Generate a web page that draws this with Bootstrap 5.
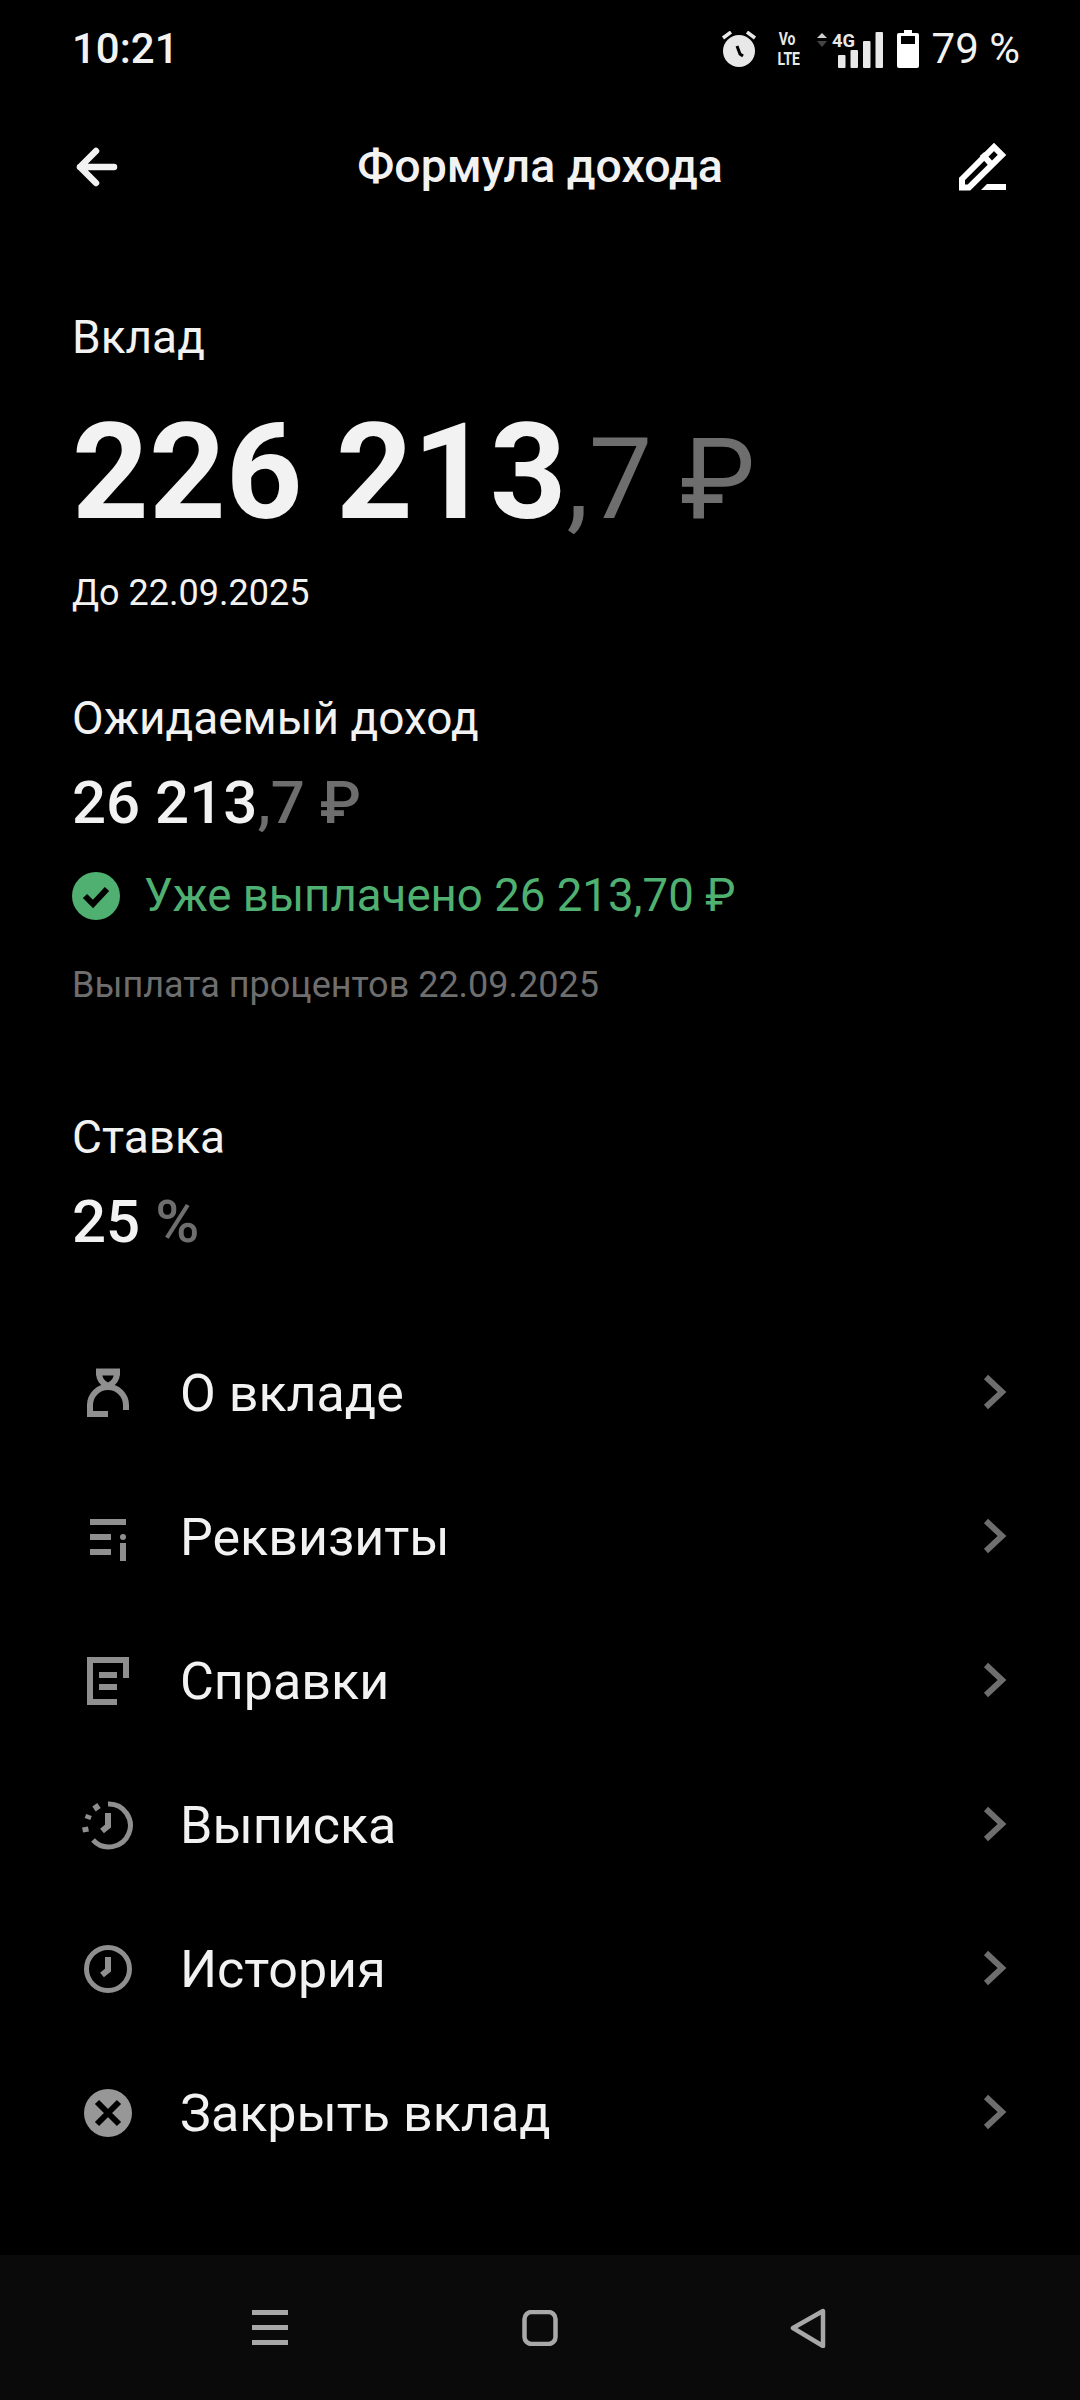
<!DOCTYPE html>
<html lang="ru">
<head>
  <meta charset="UTF-8" />
  <meta name="viewport" content="width=device-width, initial-scale=1.0" />
  <title>Формула дохода</title>
  <link rel="stylesheet" href="https://cdn.jsdelivr.net/npm/bootstrap@5.3.3/dist/css/bootstrap.min.css">
  <script src="https://cdn.jsdelivr.net/npm/bootstrap@5.3.3/dist/js/bootstrap.bundle.min.js"></script>
  <style>
    html, body {
      background: #000;
    }
    body {
      width: 1080px;
      height: 2400px;
      overflow: hidden;
      font-family: Roboto, "Liberation Sans", sans-serif;
      color: #f2f2f2;
      display: flex;
      flex-direction: column;
    }
    svg {
      display: block;
      flex: none;
    }
    .status-line {
      height: 98px;
      padding: 0 60px 0 72px;
      font-size: 42px;
      font-weight: 500;
      line-height: 1;
    }
    .status-pct {
      font-weight: 400;
      margin-left: 13px;
      white-space: nowrap;
    }
    .volte-box {
      width: 24px;
      margin-left: 18px;
      color: #e8e8e8;
      font-size: 17.5px;
      font-weight: 700;
      line-height: 20px;
      text-align: center;
    }
    .volte-box div {
      transform: scaleX(.8);
    }
    .gap-sig { margin-left: 18px; }
    .gap-bat { margin-left: 14px; }
    .top-bar {
      height: 138px;
      padding: 0 73px 0 72px;
    }
    .top-title {
      font-size: 46.5px;
      font-weight: 500;
      text-align: center;
      padding-left: 3px;
    }
    .main-area {
      padding: 0 72px;
      flex: 1;
    }
    .label-text {
      font-size: 46px;
      line-height: 50px;
    }
    .label-first { margin-top: 76px; }
    .label-income { margin-top: 79px; }
    .label-rate { margin-top: 106px; }
    .big-sum {
      font-size: 134px;
      font-weight: 700;
      line-height: 140px;
      margin-top: 41px;
    }
    .big-sum span {
      font-size: 113px;
      font-weight: 400;
      color: #6e6e6e;
    }
    .date-text {
      font-size: 36px;
      line-height: 42px;
      margin-top: 22px;
    }
    .mid-sum {
      font-size: 60px;
      font-weight: 500;
      line-height: 70px;
      margin-top: 25px;
    }
    .mid-sum span {
      color: #6e6e6e;
    }
    .paid-line {
      color: #4fb071;
      font-size: 45.6px;
      line-height: 50px;
      margin-top: 33px;
      gap: 24px;
    }
    .note-text {
      color: #6e6e6e;
      font-size: 36px;
      line-height: 42px;
      margin-top: 43px;
    }
    .menu-box {
      margin-top: 65px;
    }
    .menu-row {
      height: 144px;
      font-size: 52px;
      color: #f2f2f2;
    }
    .menu-ico {
      width: 108px;
      padding-left: 9px;
    }
    .nav-strip {
      background: #0a0a0a;
      height: 145px;
    }
    .nav-a { margin-left: 252px; }
    .nav-b { margin-left: 234px; }
    .nav-c { margin-left: 232px; }
  </style>
</head>
<body>

  <div class="status-line d-flex align-items-center justify-content-between">
    <div>10:21</div>
    <div class="d-flex align-items-center">
      <svg width="36" height="36" viewBox="0 0 36 36"><circle cx="18" cy="20" r="16" fill="#e8e8e8"/><path d="M2 7l8-6M34 7l-8-6" stroke="#e8e8e8" stroke-width="3.500"/><path d="M16 15l3 8 3 2" stroke="#000" stroke-width="3" fill="none"/></svg>
      <div class="volte-box"><div>Vo</div><div>LTE</div></div>
      <svg class="gap-sig" width="66" height="42" viewBox="0 -4 66 42"><path d="M0 6l5-5 5 5z" fill="#cfcfcf"/><path d="M0 9h10l-5 6z" fill="#444"/><text x="15" y="15" font-family="Roboto" font-size="18" font-weight="700" fill="#e8e8e8" textLength="23" lengthAdjust="spacingAndGlyphs">4G</text><g fill="#e8e8e8"><rect x="21" y="23" width="7.500" height="13" rx="1"/><rect x="33.500" y="18" width="7.500" height="18" rx="1"/><rect x="46" y="9" width="7.500" height="27" rx="1"/><rect x="58.500" y="0" width="7.500" height="36" rx="1"/></g></svg>
      <svg class="gap-bat" width="22" height="38" viewBox="0 0 22 38"><path d="M7 0h8v3h5a2 2 0 0 1 2 2v31a2 2 0 0 1-2 2H2a2 2 0 0 1-2-2V5a2 2 0 0 1 2-2h5z" fill="#fff"/><rect x="4" y="6" width="14" height="8" fill="#000"/></svg>
      <div class="status-pct">79 %</div>
    </div>
  </div>

  <div class="top-bar d-flex align-items-center">
    <svg width="46" height="40" viewBox="0 0 46 40" fill="none" stroke="#f2f2f2" stroke-width="6.500" stroke-linecap="round" stroke-linejoin="round"><path d="M42 20H8M24 4L8 20l16 16"/></svg>
    <div class="top-title flex-grow-1">Формула дохода</div>
    <svg width="48" height="48" viewBox="0 0 48 48" fill="none" stroke="#fff" stroke-width="6"><path d="M3 36L35 4 43 12 10 44.500H3z"/><path d="M23 11l10 11"/><path d="M22 47l6-6h19v6z" fill="#fff" stroke="none"/></svg>
  </div>

  <div class="main-area">
    <div class="label-text label-first">Вклад</div>
    <div class="big-sum">226 213<span>,7 ₽</span></div>
    <div class="date-text">До 22.09.2025</div>

    <div class="label-text label-income">Ожидаемый доход</div>
    <div class="mid-sum">26 213<span>,7 ₽</span></div>
    <div class="paid-line d-flex align-items-center">
      <svg width="48" height="48" viewBox="0 0 48 48"><circle cx="24" cy="24" r="24" fill="#4fb071"/><path d="M13 24l8 8 14-15" fill="none" stroke="#000" stroke-width="6"/></svg>
      <div>Уже выплачено 26 213,70 ₽</div>
    </div>
    <div class="note-text">Выплата процентов 22.09.2025</div>

    <div class="label-text label-rate">Ставка</div>
    <div class="mid-sum">25 <span>%</span></div>

    <div class="menu-box" id="menuBox"></div>
  </div>

  <div class="nav-strip d-flex align-items-center">
    <svg class="nav-a" width="36" height="36" viewBox="0 0 36 36" fill="#a8a8a8"><rect y="0" width="36" height="5"/><rect y="15" width="36" height="5"/><rect y="30" width="36" height="5"/></svg>
    <svg class="nav-b" width="36" height="36" viewBox="0 0 36 36" fill="none" stroke="#a8a8a8" stroke-width="4.500"><rect x="2.500" y="2" width="31" height="32" rx="7"/></svg>
    <svg class="nav-c" width="36" height="40" viewBox="0 0 36 40" fill="none" stroke="#a8a8a8" stroke-width="4.500" stroke-linejoin="round"><path d="M33 3v35L3 20z"/></svg>
  </div>

  <script>
    const icons = [
      `<path d="M9 47V38a18 18 0 0 1 36 0v5" /><path d="M6 47H27" /><path d="M15 5H39" stroke-width="7"/><path d="M18 6Q18 15 27 19Q36 15 36 6" />`,
      `<path d="M9 11H45M9 26H30M9 41H30M42 32V50" /><circle cx="42" cy="26" r="3" fill="#8f8f8f" stroke="none"/>`,
      `<path d="M45 23V5H9V47H36M18 20H36M18 32H36" />`,
      `<path d="M27 5A21.500 21.500 0 1 1 12 41" stroke-width="5"/><path d="M13 10l5-3.500M6.500 20l1.500-4M5 33l-1-5" /><path d="M27 14V27L21 32" />`,
      `<circle cx="27" cy="26" r="21.500" stroke-width="5"/><path d="M27 14V27L21 32" />`,
      `<circle cx="27" cy="26" r="24" fill="#979797" stroke="none"/><path d="M16 15L38 37M38 15L16 37" stroke="#000"/>`
    ];
    const rows = ["О вкладе", "Реквизиты", "Справки", "Выписка", "История", "Закрыть вклад"];

    document.getElementById("menuBox").innerHTML = rows.map((name, i) => `
      <div class="menu-row d-flex align-items-center">
        <div class="menu-ico"><svg width="54" height="54" viewBox="0 0 54 54" fill="none" stroke="#8f8f8f" stroke-width="6">${icons[i]}</svg></div>
        <div class="flex-grow-1">${name}</div>
        <svg class="mb-1" width="26" height="36" viewBox="0 0 26 36" fill="none" stroke="#6e6e6e" stroke-width="6"><path d="M4 3l16 15L4 33"/></svg>
      </div>
    `).join("");
  </script>
</body>
</html>
